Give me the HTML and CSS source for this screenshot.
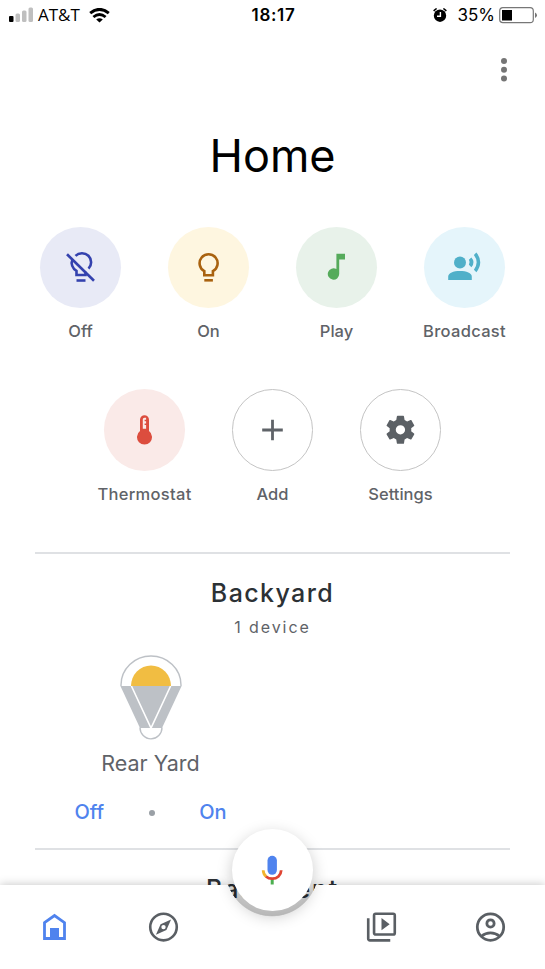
FILE: index.html
```html
<!DOCTYPE html>
<html lang="en">
<head>
    <meta charset="UTF-8">
    <meta name="viewport" content="width=device-width, initial-scale=1.0">
    <title>Home</title>
    <link rel="stylesheet" href="styles.css">
</head>
<body>

<div class="phone">
    <header class="status">
        <div class="status-left">
            <svg width="25" height="16" viewBox="0 0 25 16">
                <rect x="0" y="9" width="4.5" height="6" rx="1" fill="#000"/>
                <rect x="6.5" y="6.5" width="4.5" height="8.5" rx="1.5" fill="#bfbfbf"/>
                <rect x="13" y="3.5" width="4.5" height="11.5" rx="1.5" fill="#bfbfbf"/>
                <rect x="19.5" y="0.5" width="4.5" height="14.5" rx="1.5" fill="#bfbfbf"/>
            </svg>
            <span class="carrier">AT&amp;T</span>
            <svg class="wifi" width="21" height="15" viewBox="0 0 21 15">
                <path d="M1.2 5.2Q10.5-2.400 19.800 5.200" fill="none" stroke="#000" stroke-width="3"/>
                <path d="M4.400 9Q10.500 4 16.600 9" fill="none" stroke="#000" stroke-width="2.800"/>
                <path d="M7.200 11.600Q10.500 8.800 13.800 11.600L10.500 14.600Z"/>
            </svg>
        </div>
        <span class="clock">18:17</span>
        <div class="status-right">
            <svg width="14" height="15" viewBox="0 0 14 15">
                <circle cx="7" cy="7.700" r="6.200"/>
                <path d="M.6 2.900 3.600.5M13.400 2.900 10.400.5" stroke="#000" stroke-width="1.500"/>
                <path d="M7.400 4v4.300H4" fill="none" stroke="#fff" stroke-width="1.400"/>
            </svg>
            <span class="percent">35%</span>
            <svg class="battery" width="39" height="17" viewBox="0 0 39 17">
                <rect x=".7" y=".7" width="33.600" height="15" rx="3.200" fill="#fff" stroke="#777" stroke-width="1.200"/>
                <rect x="3" y="3" width="10" height="10.500"/>
                <path d="M36 5.500q2 1 2 2.800t-2 2.800z" fill="#777"/>
            </svg>
        </div>
    </header>

    <div class="toolbar">
        <svg width="8" height="26" viewBox="0 0 8 26" fill="#757575">
            <circle cx="4" cy="4" r="3"/><circle cx="4" cy="12.700" r="3"/><circle cx="4" cy="21.400" r="3"/>
        </svg>
    </div>

    <h1 class="title">Home</h1>

    <section class="actions">
        <div class="action">
            <div class="circle off">
                <svg width="34" height="34" viewBox="0.5 0.8 34 34" fill="none" stroke="#3442ae" stroke-width="2.600">
                    <path d="M12 6.700A8.800 8.800 0 0 1 25 19.500"/>
                    <path d="M9 10C7 14.500 9 19.500 13 21.700V25.800H22V22.500"/>
                    <path d="M13 31.300h9"/>
                    <path d="M3.500 5 30.500 31.500"/>
                </svg>
            </div>
            <span class="label">Off</span>
        </div>
        <div class="action">
            <div class="circle on">
                <svg width="34" height="34" viewBox="0.5 1 34 34" fill="none" stroke="#a9620f" stroke-width="2.600">
                    <path d="M12.800 26.200V22.100A9 9 0 1 1 21.400 22.100V26.200Z"/>
                    <path d="M12.800 31.300h8.600"/>
                </svg>
            </div>
            <span class="label">On</span>
        </div>
        <div class="action">
            <div class="circle play">
                <svg width="34" height="34" viewBox="1 0.5 34 34" fill="#55ab5b">
                    <path d="M17.400 4.200H26V10H20.200V24.500A5.700 5.700 0 1 1 17.400 19.600Z"/>
                </svg>
            </div>
            <span class="label">Play</span>
        </div>
        <div class="action">
            <div class="circle broadcast">
                <svg width="34" height="34" viewBox="0.6 0.8 34 34" fill="#50b0c9">
                    <circle cx="12.600" cy="13.400" r="6"/>
                    <path d="M.8 30.700V27.500C.8 23.700 6 21.800 12.500 21.800S24.400 23.700 24.400 27.500V30.700Z"/>
                    <path d="M24 8.200 21.500 10.600Q23 13 21.500 15.600L24 18Q28.300 13 24 8.200Z"/>
                    <path d="M29 3.200 26.500 5.700Q32 13 26.500 20.500L29 23Q36.700 13 29 3.200Z"/>
                </svg>
            </div>
            <span class="label wide">Broadcast</span>
        </div>
        <div class="action">
            <div class="circle thermostat">
                <svg width="34" height="34" viewBox="0.5 0.3 34 34">
                    <path d="M12.500 18.400V7A4.500 4.500 0 0 1 21.500 7V18.400A7.500 7.500 0 1 1 12.500 18.400Z" fill="#dc4d3e"/>
                    <path d="M15.300 6.600q0-1.600 1.700-1.600h1.600v2h-1.500v1.500h1.500v2.300h-1.500v1.500h1.500v3.700h-3.300z" fill="#faebe9"/>
                </svg>
            </div>
            <span class="label wide">Thermostat</span>
        </div>
        <div class="action">
            <div class="circle outlined">
                <svg width="34" height="34" viewBox="0.5 0 34 34" stroke="#5f6368" stroke-width="2.800">
                    <path d="M6.700 17H27.300M17 6.700V27.300"/>
                </svg>
            </div>
            <span class="label">Add</span>
        </div>
        <div class="action">
            <div class="circle outlined">
                <svg width="35" height="35" viewBox="0.100 -0.200 24 24" fill="#5b6065">
                    <path d="M19.500 12c0-.3 0-.7-.1-1l2-1.600c.2-.1.200-.4.100-.6l-1.900-3.300c-.1-.2-.4-.3-.6-.2l-2.400 1c-.5-.4-1.100-.7-1.700-1l-.4-2.500c0-.3-.2-.4-.5-.4h-3.900c-.2 0-.4.1-.5.400l-.4 2.500c-.6.3-1.200.6-1.700 1l-2.400-1c-.2-.1-.5 0-.6.2L2.600 8.800c-.1.200-.1.500.1.600l2 1.600a8 8 0 0 0 0 2l-2 1.600c-.2.100-.2.400-.1.600l1.900 3.300c.1.200.4.300.6.200l2.400-1c.5.400 1.100.7 1.700 1l.4 2.500c.1.300.3.400.5.400H14c.3 0 .5-.1.500-.4l.4-2.500c.6-.3 1.200-.6 1.700-1l2.400 1c.2.100.5 0 .6-.2l1.900-3.300c.1-.2.100-.5-.1-.6l-2-1.600c.1-.3.100-.7.100-1zM12.050 15.200a3.200 3.200 0 1 1 0-6.400 3.200 3.200 0 0 1 0 6.400z"/>
                </svg>
            </div>
            <span class="label">Settings</span>
        </div>
    </section>

    <section class="room">
        <h2 class="room-name">Backyard</h2>
        <p class="room-count">1 device</p>
        <div class="device">
            <svg width="62" height="86" viewBox="0 0 62 86">
                <path d="M1 31V30A30 29 0 0 1 61 30V31" fill="#fff" stroke="#bdc1c6" stroke-width="1.400"/>
                <path d="M11 31A20 20.500 0 0 1 51 31Z" fill="#f1bd42"/>
                <path d="M.4 31H61.600L42 73H20Z" fill="#bdc1c6"/>
                <path d="M11.400 31 31 73 50.600 31" fill="none" stroke="#fff" stroke-width="1.600"/>
                <path d="M20 73A11 11 0 0 0 42 73Z" fill="#fff"/>
                <path d="M20 72.500A11 11.400 0 0 0 42 72.500" fill="none" stroke="#bdc1c6" stroke-width="1.400"/>
            </svg>
            <p class="device-name">Rear Yard</p>
            <div class="switch">
                <span class="switch-off">Off</span>
                <span class="dot"></span>
                <span class="switch-on">On</span>
            </div>
        </div>
    </section>

    <section class="room">
        <h2 class="room-name basement">Basement</h2>
    </section>

    <nav class="nav">
        <div class="notch"></div>
        <div class="nav-edge"><div class="nav-bar"></div></div>
        <div class="nav-items">
            <svg width="35" height="35" viewBox="0 0.5 35 35">
                <path d="M7.500 13.200 17.500 6 27.500 13.200V29H7.500Z" fill="#fff" stroke="#4f83ee" stroke-width="2.800"/>
                <path d="M13 18.500h9V30h-9z" fill="#4f83ee"/>
            </svg>
            <svg width="35" height="35" viewBox="0 0.300 24 24" fill="#5a5f64" fill-rule="evenodd">
                <path d="M12 2a10 10 0 1 0 0 20 10 10 0 0 0 0-20zm0 18.200a8.200 8.200 0 1 1 0-16.400 8.200 8.200 0 0 1 0 16.400zM6.800 17.200l7.200-3.200 3.200-7.200L10 10zM12 10.500a1.500 1.500 0 1 1 0 3 1.500 1.500 0 0 1 0-3z"/>
            </svg>
            <span></span>
            <svg width="35" height="35" viewBox="0 0.300 24 24" fill="#5a5f64">
                <path d="M3.800 6H2v14c0 1.100.9 2 2 2h14v-1.800H3.800zM20 2H8a2 2 0 0 0-2 2v12c0 1.100.9 2 2 2h12a2 2 0 0 0 2-2V4a2 2 0 0 0-2-2zm.2 14.200H7.800V3.800h12.400zM12 5.800v8.400l5.600-4.200z"/>
            </svg>
            <svg width="35" height="35" viewBox="0 0.300 24 24" fill="none" stroke="#5a5f64" stroke-width="1.900">
                <circle cx="12" cy="12" r="9.050"/>
                <circle cx="12" cy="9.500" r="2.500"/>
                <path d="M5.800 18.300Q8.500 16 12 16T18.200 18.300"/>
            </svg>
        </div>
        <div class="mic">
            <svg width="34" height="34" viewBox="0 0 34 34" fill="none">
                <rect x="12.500" y="2.800" width="9.400" height="19" rx="4.700" fill="#4f83ee"/>
                <path d="M17.200 25.500V31.500" stroke="#4caf50" stroke-width="3"/>
                <path d="M8.200 17.300Q8.300 21.300 11.200 23.600" stroke="#f2b32c" stroke-width="2.800"/>
                <path d="M11 23.500Q13.500 25.700 17.200 25.700C22 25.700 26 22.500 26.200 17.300" stroke="#df4533" stroke-width="2.800"/>
            </svg>
        </div>
    </nav>
</div>

</body>
</html>
```

FILE: styles.css
```css
body {
    margin: 0;
    background-color: #fff;
    font-family: Inter, Roboto, sans-serif;
}
svg {
    display: block;
}
h1, h2, p {
    margin: 0;
}
.phone {
    position: relative;
    width: 545px;
    height: 969px;
    overflow: hidden;
    background-color: #fff;
}
.status {
    display: grid;
    grid-template-columns: 1fr auto 1fr;
    align-items: center;
    height: 30px;
    padding: 0 7px 0 9px;
    color: #000;
}
.status-left, .status-right {
    display: flex;
    align-items: center;
}
.status-right {
    justify-content: flex-end;
}
.carrier {
    margin-left: 4px;
    font-family: "Open Sans", sans-serif;
    font-size: 17px;
    line-height: 30px;
}
.wifi {
    margin-left: 9px;
}
.clock {
    font-size: 17px;
    font-weight: 600;
    letter-spacing: 0.7px;
}
.percent {
    margin-left: 10px;
    font-size: 17px;
}
.battery {
    margin-left: 4px;
}
.toolbar {
    display: flex;
    justify-content: flex-end;
    height: 98px;
    padding: 27px 37px 0 0;
    box-sizing: border-box;
}
.title {
    height: 98.5px;
    line-height: 56px;
    text-align: center;
    font-size: 45px;
    font-weight: 400;
    color: #000;
}
.actions {
    display: flex;
    flex-wrap: wrap;
    justify-content: center;
    width: 512px;
    height: 325px;
    margin: 0 auto;
}
.action {
    display: flex;
    flex-direction: column;
    align-items: center;
    width: 128px;
    height: 162.5px;
}
.circle {
    display: flex;
    align-items: center;
    justify-content: center;
    width: 81.5px;
    height: 81.5px;
    border-radius: 50%;
    box-sizing: border-box;
}
.off { background-color: #e8eaf6; }
.on { background-color: #fef6e0; }
.play { background-color: #e8f2ea; }
.broadcast { background-color: #e5f5fb; }
.thermostat { background-color: #faeae8; }
.outlined { border: 1px solid #c4c4c4; }
.label {
    margin-top: 13px;
    line-height: 20px;
    font-size: 16.5px;
    font-weight: 500;
    color: #5f6368;
}
.wide {
    letter-spacing: 0.3px;
}
.room {
    width: 475px;
    height: 294.5px;
    margin: 0 auto;
    border-top: 2px solid #dfe1e4;
    text-align: center;
}
.room-name {
    padding-top: 23px;
    line-height: 32px;
    font-size: 25px;
    font-weight: 500;
    letter-spacing: 1.4px;
    color: #2c3135;
}
.room-count {
    padding-top: 8px;
    line-height: 20px;
    font-size: 16px;
    letter-spacing: 1.9px;
    color: #5f6368;
}
.device {
    display: flex;
    flex-direction: column;
    align-items: center;
    width: 231px;
    padding-top: 18px;
}
.device-name {
    margin-top: 8px;
    line-height: 28px;
    font-size: 21.5px;
    color: #5f6368;
}
.switch {
    display: flex;
    align-items: center;
    justify-content: space-between;
    width: 152px;
    margin-top: 22px;
    line-height: 26px;
    font-size: 20px;
    font-weight: 500;
    color: #4f83ee;
}
.dot {
    width: 6px;
    height: 6px;
    margin-top: 3px;
    border-radius: 50%;
    background-color: #9aa0a6;
}
.basement {
    letter-spacing: 1.7px;
}
.nav {
    position: absolute;
    left: 0;
    top: 885px;
    width: 545px;
    height: 84px;
}
/* bar is cut out around the mic button */
.notch {
    position: absolute;
    left: 226px;
    top: -61px;
    width: 92px;
    height: 92px;
    border-radius: 50%;
    background: linear-gradient(rgba(0, 0, 0, 0) 60%, rgba(0, 0, 0, 0.1) 78%);
}
.nav-edge {
    position: absolute;
    inset: 0;
    filter: drop-shadow(0 -1px 4px rgba(0, 0, 0, 0.2));
}
.nav-bar {
    height: 84px;
    background: radial-gradient(circle at 272px -15px, transparent 46px, #fff 46.7px);
}
.nav-items {
    position: relative;
    display: grid;
    grid-template-columns: repeat(5, 109px);
    align-items: center;
    justify-items: center;
    height: 84px;
}
.mic {
    position: absolute;
    left: 231.5px;
    top: -56px;
    display: flex;
    align-items: center;
    justify-content: center;
    width: 81.5px;
    height: 82px;
    border-radius: 50%;
    background-color: #fff;
    box-shadow: 0 5px 16px rgba(0, 0, 0, 0.22);
}
```
